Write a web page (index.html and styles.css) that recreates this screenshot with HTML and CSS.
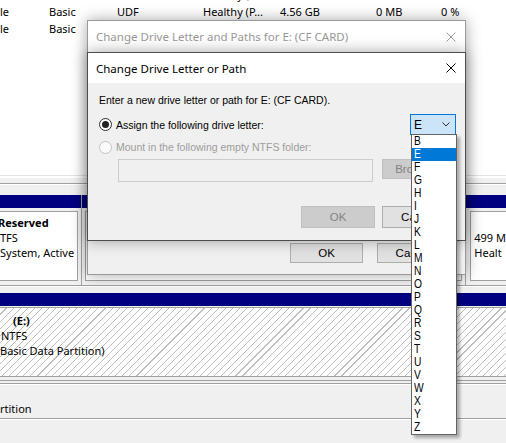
FILE: index.html
```html
<!DOCTYPE html>
<html>
<head>
<meta charset="utf-8">
<title>Change Drive Letter or Path</title>
<link rel="stylesheet" href="styles.css">
</head>
<body>
<div class="mmc">
  <div class="vol-list">
    <div class="rows">
      <div class="row"><span>le</span><span>Basic</span><span>UDF</span><span>Healthy (P...</span><span>4.56 GB</span><span>0 MB</span><span>0 %</span></div>
      <div class="row"><span>le</span><span>Basic</span><span>UDF</span><span>Healthy (P...</span><span>4.56 GB</span><span>0 MB</span><span>0 %</span></div>
      <div class="row"><span>le</span><span>Basic</span><span>UDF</span><span>Healthy (P...</span><span>4.56 GB</span><span>0 MB</span><span>0 %</span></div>
    </div>
  </div>
  <div class="split"></div>
  <div class="map">
    <div class="disk disk1">
      <div class="part p-res">
        <div class="bar"></div>
        <div class="pbody"><div class="pbox"><b class="cut">Reserved</b><span>TFS</span><span>System, Active</span></div></div>
      </div>
      <div class="part p-mid">
        <div class="bar"></div>
        <div class="pbody"><div class="pbox"></div></div>
      </div>
      <div class="part p-rec">
        <div class="bar"></div>
        <div class="pbody"><div class="pbox"><span>&nbsp;</span><span>499 M</span><span>Healt</span></div></div>
      </div>
    </div>
    <div class="disk disk2">
      <div class="part p-e">
        <div class="bar"></div>
        <div class="pbody"><div class="pbox hatched"><b class="vol">(E:)</b><span class="ntfs">NTFS</span><span>Basic Data Partition)</span></div></div>
      </div>
    </div>
    <div class="legend"><span>rtition</span></div>
  </div>
</div>

<div class="dlg outer">
  <div class="title"><span>Change Drive Letter and Paths for E: (CF CARD)</span>
    <svg class="close" width="10" height="10" viewBox="0 0 10 10"><path d="M0.5 0.5L9.5 9.5M9.5 0.5L0.5 9.5" stroke="#9a9a9a" stroke-width="1"/></svg>
  </div>
  <div class="obody">
    <div class="btnrow obtns">
      <div class="btn">OK</div>
      <div class="btn">Cancel</div>
    </div>
  </div>
</div>

<div class="dlg inner">
  <div class="title"><span>Change Drive Letter or Path</span>
    <svg class="close" width="10" height="10" viewBox="0 0 10 10"><path d="M0.5 0.5L9.5 9.5M9.5 0.5L0.5 9.5" stroke="#000" stroke-width="1"/></svg>
  </div>
  <div class="ibody">
    <p class="prompt">Enter a new drive letter or path for E: (CF CARD).</p>
    <div class="opt assign">
      <label class="radio"><span class="dot on"></span>Assign the following drive letter:</label>
      <div class="combo"><span>E</span>
        <svg width="8" height="5" viewBox="0 0 8 5"><path d="M0.5 0.5L4 4L7.5 0.5" fill="none" stroke="#333" stroke-width="1"/></svg>
      </div>
    </div>
    <div class="opt mount">
      <label class="radio off"><span class="dot"></span>Mount in the following empty NTFS folder:</label>
    </div>
    <div class="pathrow">
      <div class="path"></div>
      <div class="btn dis browse">Browse...</div>
    </div>
    <div class="btnrow ibtns">
      <div class="btn dis">OK</div>
      <div class="btn">Cancel</div>
    </div>
  </div>
</div>

<ul class="droplist">
  <li><span>B</span></li><li class="sel"><span>E</span></li><li><span>F</span></li><li><span>G</span></li><li><span>H</span></li><li><span>I</span></li><li><span>J</span></li><li><span>K</span></li><li><span>L</span></li><li><span>M</span></li><li><span>N</span></li><li><span>O</span></li><li><span>P</span></li><li><span>Q</span></li><li><span>R</span></li><li><span>S</span></li><li><span>T</span></li><li><span>U</span></li><li><span>V</span></li><li><span>W</span></li><li><span>X</span></li><li><span>Y</span></li><li><span>Z</span></li>
</ul>
</body>
</html>
```
FILE: styles.css
```css
* { box-sizing: border-box; margin: 0; padding: 0; }
html, body { width: 506px; height: 443px; overflow: hidden; }
body {
  position: relative;
  background: #f0f0f0;
  font-family: "Noto Sans", "Open Sans", sans-serif;
  font-size: 11px;
  color: #000;
}

/* background console */
.mmc { display: flex; flex-direction: column; height: 443px; }
.vol-list { height: 176px; background: #fff; border-bottom: 1px solid #e3e3e3; overflow: hidden; }
.rows { margin-top: -14px; }
.row {
  display: grid;
  grid-template-columns: 49px 68px 86px 77px 96px 65px auto;
  height: 17px; line-height: 17px; white-space: nowrap;
}
.split { height: 7px; border-top: 2px solid #fff; }
.map {
  flex: 1; display: flex; flex-direction: column;
  border-top: 1px solid #a0a0a0; box-shadow: inset 0 1px #fff;
  padding-top: 11px;
}
.disk { display: flex; }
.disk1 { height: 91px; border-bottom: 1px solid #a0a0a0; box-shadow: 0 1px #fff; }
.part { display: flex; flex-direction: column; }
.bar { height: 13px; background: #000080; flex: none; }
.pbody { flex: 1; padding: 3px 3px 4px 3px; display: flex; }
.pbox {
  flex: 1; background: #fff; border: 1px solid #a0a0a0;
  padding-top: 3px; display: flex; flex-direction: column;
  line-height: 15px; white-space: nowrap; overflow: hidden;
}
.p-res { width: 83px; border-right: 1px solid #a0a0a0; }
.p-res .pbody { padding-left: 0; }
.p-res .pbox { border-left: none; }
.cut { margin-left: -2px; }
.p-mid { width: 389px; border-right: 1px solid #a0a0a0; }
.p-rec { flex: 1; }
.p-rec .pbody { padding-left: 4px; padding-right: 0; }
.p-rec .pbox { padding-left: 3px; border-right: none; }

.disk2 { margin-top: 7px; height: 88px; }
.p-e { flex: 1; }
.p-e .pbody { padding: 1px 0 3px 0; border-bottom: 1px solid #a0a0a0; }
.hatched {
  border-left: none; border-right: none; padding-top: 5px;
  background: repeating-linear-gradient(135deg, #fff 0 4.2px, #bdbdbd 4.2px 5px);
}
.vol { padding-left: 13px; }
.ntfs { padding-left: 1px; }

.legend {
  margin-top: 2px; height: 36px;
  border-top: 1px solid #a0a0a0; border-bottom: 1px solid #a0a0a0;
  box-shadow: inset 0 1px #fff, 0 1px #fff;
  display: flex; align-items: flex-end; padding-bottom: 2px;
  line-height: 15px;
}

/* dialogs */
.dlg {
  position: absolute; left: 87px; width: 379px;
  background: #f0f0f0;
  box-shadow: 0 0 14px rgba(0, 0, 0, 0.35);
  display: flex; flex-direction: column;
}
.outer { top: 20px; height: 255px; border: 1px solid #9a9a9a; }
.inner { top: 52px; height: 189px; border: 1px solid #4d4d4d; }
.title {
  background: #fff; flex: none;
  display: flex; align-items: center; justify-content: space-between;
  padding: 0 9px 0 8px; white-space: nowrap;
  font-size: 11.5px;
}
.outer .title { height: 31px; color: #999; }
.inner .title { height: 30px; }

.obody { flex: 1; display: flex; flex-direction: column; justify-content: flex-end; padding: 0 15px 11px 0; }
.btnrow { display: flex; justify-content: flex-end; }
.btn {
  width: 73px; height: 20px; background: #e1e1e1; border: 1px solid #adadad;
  display: flex; align-items: center; justify-content: center;
  font-family: "Liberation Sans", Arial, sans-serif; font-size: 11.5px; color: #000;
  white-space: nowrap; overflow: hidden;
}
.obtns { gap: 14px; }
.btn.dis { background: #cccccc; border-color: #bfbfbf; color: #838383; }

.ibody {
  flex: 1; padding: 10px 9px 0 11px;
  font-family: "Liberation Sans", Arial, sans-serif; font-size: 10.5px;
  display: flex; flex-direction: column;
}
.prompt { line-height: 14px; height: 14px; white-space: nowrap; }
.opt { display: flex; align-items: center; justify-content: space-between; }
.assign { margin-top: 7px; height: 21px; }
.mount { margin-top: 5px; height: 14px; }
.radio { display: flex; align-items: center; gap: 4px; white-space: nowrap; line-height: 14px; }
.radio.off { color: #9d9d9d; }
.dot {
  width: 13px; height: 13px; border-radius: 50%;
  border: 1px solid #333; background: #fff; position: relative; flex: none;
}
.dot.on::after {
  content: ""; position: absolute; left: 2px; top: 2px;
  width: 7px; height: 7px; border-radius: 50%; background: #222;
}
.radio.off .dot { border-color: #c2c2c2; background: #fafafa; }
.combo {
  width: 46px; height: 21px; border: 1px solid #0078d7; background: #cce4f7;
  display: flex; align-items: center; justify-content: space-between;
  padding: 0 5px 0 3px; font-size: 12px;
}
.pathrow { display: flex; gap: 9px; margin-top: 5px; padding-left: 19px; align-items: flex-start; }
.path { width: 256px; height: 23px; border: 1px solid #cccccc; background: #f0f0f0; }
.browse { width: 74px; height: 20px; }
.ibtns { margin-top: 24px; gap: 7px; }
.ibtns .btn { width: 74px; height: 22px; }

/* open drop-down */
.droplist {
  position: absolute; left: 411px; top: 134px; width: 46px;
  list-style: none; background: #fff; border: 1px solid #646464;
  box-shadow: 3px 3px 3px rgba(0, 0, 0, 0.3);
  font-family: "Liberation Sans", Arial, sans-serif; font-size: 12.5px;
}
.droplist li { height: 13px; line-height: 13px; padding-left: 2px; }
.droplist li span { display: inline-block; transform: scaleX(0.82); transform-origin: left center; }
.droplist li.sel { background: #0078d7; color: #fff; }
```
